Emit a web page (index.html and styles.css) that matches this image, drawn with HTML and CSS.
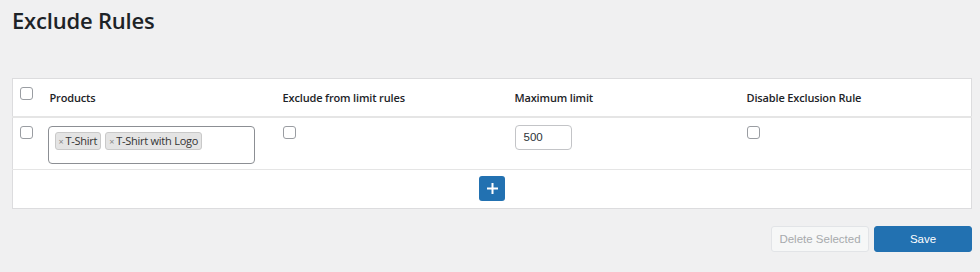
FILE: index.html
```html
<!DOCTYPE html>
<html lang="en">
<head>
    <meta charset="UTF-8">
    <title>Exclude Rules</title>
    <link rel="stylesheet" href="styles.css">
</head>
<body>
    <div class="wrap">
        <h1>Exclude Rules</h1>

        <table class="rules">
            <thead>
                <tr>
                    <th class="check-col"><span class="box"></span></th>
                    <th>Products</th>
                    <th>Exclude from limit rules</th>
                    <th>Maximum limit</th>
                    <th>Disable Exclusion Rule</th>
                </tr>
            </thead>
            <tbody>
                <tr>
                    <td class="check-col"><span class="box"></span></td>
                    <td>
                        <div class="product-select">
                            <span class="tag"><span class="x">×</span>T-Shirt</span>
                            <span class="tag"><span class="x">×</span>T-Shirt with Logo</span>
                        </div>
                    </td>
                    <td><span class="box"></span></td>
                    <td><div class="num-input">500</div></td>
                    <td><span class="box"></span></td>
                </tr>
            </tbody>
            <tfoot>
                <tr>
                    <td colspan="5" class="add-cell">
                        <button class="add-btn" aria-label="Add rule">
                            <svg width="13" height="13" viewBox="0 0 13 13">
                                <path d="M6.5 1v11M1 6.5h11" stroke="#fff" stroke-width="2"/>
                            </svg>
                        </button>
                    </td>
                </tr>
            </tfoot>
        </table>

        <div class="actions">
            <button class="btn btn-disabled">Delete Selected</button>
            <button class="btn btn-primary">Save</button>
        </div>
    </div>
</body>
</html>
```

FILE: styles.css
```css
* {
    margin: 0;
    padding: 0;
    box-sizing: border-box;
}

body {
    background: #f0f0f1;
    font-family: 'Open Sans', 'Noto Sans', sans-serif;
    color: #1d2327;
}

.wrap {
    width: 960px;
    margin-left: 12px;
}

h1 {
    font-size: 22px;
    font-weight: 600;
    line-height: 28px;
    padding-top: 6px;
    letter-spacing: -0.2px;
    color: #1d2327;
}

.rules {
    width: 960px;
    margin-top: 44px;
    border-collapse: collapse;
    background: #fff;
    border: 1px solid #dcdcde;
    table-layout: fixed;
}

.rules th {
    height: 38px;
    text-align: left;
    font-size: 11px;
    letter-spacing: -0.15px;
    font-weight: 600;
    padding: 0 0 0 7px;
    border-bottom: 2px solid #e5e5e5;
    vertical-align: middle;
}

.rules th:nth-child(2) { width: 233px; }
.rules th:nth-child(3) { width: 232px; }
.rules th:nth-child(4) { width: 232px; }

.rules td {
    vertical-align: top;
    padding: 7px 0 0 7px;
    height: 53px;
    border-bottom: 1px solid #e5e5e5;
}

.rules .check-col {
    width: 30px;
    padding-left: 7px;
}

.rules th.check-col {
    vertical-align: top;
    padding-top: 7px;
}

.box {
    display: block;
    width: 13px;
    height: 13px;
    border: 1px solid #9a9da2;
    border-radius: 3px;
    background: #fff;
    margin-top: 1px;
}

.product-select {
    width: 207px;
    height: 38px;
    margin-left: -2px;
    margin-top: 1px;
    border: 1px solid #8c8f94;
    border-radius: 4px;
    padding: 5px 0 0 6px;
    display: flex;
    gap: 4px;
    align-items: flex-start;
}

.tag {
    font-size: 11px;
    letter-spacing: -0.25px;
    line-height: 15px;
    background: #e4e4e4;
    border: 1px solid #c9c9c9;
    border-radius: 3px;
    padding: 0 3px;
    color: #333;
}

.tag .x {
    color: #888;
    font-size: 9px;
    margin-right: 2px;
}

.num-input {
    width: 57px;
    height: 25px;
    border: 1px solid #c3c4c7;
    border-radius: 4px;
    font-family: 'Liberation Sans', Arial, sans-serif;
    font-size: 11.5px;
    line-height: 23px;
    padding-left: 8px;
    color: #2c3338;
}

.rules td.add-cell {
    height: 39px;
    padding: 6px 0 0 0;
    text-align: center;
    border-bottom: none;
}

.add-btn {
    width: 26px;
    height: 25px;
    background: #2271b1;
    border: none;
    border-radius: 3px;
    display: inline-flex;
    align-items: center;
    justify-content: center;
}

.actions {
    display: flex;
    justify-content: flex-end;
    gap: 5px;
    margin-top: 17px;
}

.btn {
    width: 98px;
    height: 26px;
    border-radius: 3px;
    font-family: 'Liberation Sans', Arial, sans-serif;
    font-size: 11.5px;
}

.btn-disabled {
    background: #f6f7f7;
    border: 1px solid #e2e4e7;
    color: #a7aaad;
}

.btn-primary {
    background: #2271b1;
    border: 1px solid #2271b1;
    color: #fff;
}
```
